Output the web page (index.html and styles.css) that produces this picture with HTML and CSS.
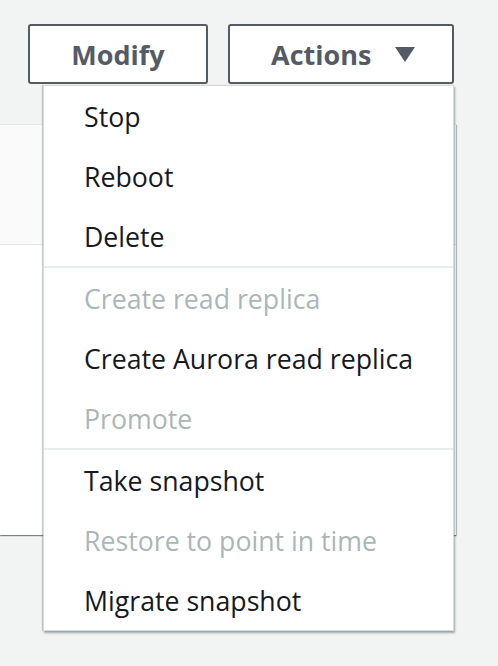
FILE: index.html
```html
<!DOCTYPE html>
<html lang="en">
<head>
<meta charset="utf-8">
<title>Actions menu</title>
<link rel="stylesheet" href="styles.css">
</head>
<body>
<div class="page">
  <div class="toolbar">
    <button class="btn btn-modify" type="button">Modify</button>
    <div class="dropdown">
      <button class="btn btn-actions" type="button">
        <span>Actions</span>
        <svg class="caret" width="20" height="15" viewBox="0 0 20 15" aria-hidden="true"><polygon points="0,0 20,0 10,15" fill="#545b64"/></svg>
      </button>
      <ul class="menu">
        <li class="group">
          <div class="item">Stop</div>
          <div class="item">Reboot</div>
          <div class="item">Delete</div>
        </li>
        <li class="group">
          <div class="item disabled">Create read replica</div>
          <div class="item">Create Aurora read replica</div>
          <div class="item disabled">Promote</div>
        </li>
        <li class="group">
          <div class="item">Take snapshot</div>
          <div class="item disabled">Restore to point in time</div>
          <div class="item">Migrate snapshot</div>
        </li>
      </ul>
    </div>
  </div>
  <div class="panel">
    <div class="panel-head"></div>
    <div class="panel-body"></div>
  </div>
</div>
</body>
</html>
```

FILE: styles.css
```css
html, body {
  margin: 0;
  padding: 0;
  background: #f2f3f3;
  font-family: "Open Sans", "Noto Sans", "Liberation Sans", sans-serif;
}

.page {
  width: 498px;
  height: 666px;
  overflow: hidden;
}

.toolbar {
  display: flex;
  justify-content: flex-end;
  gap: 20px;
  padding: 24px 44px 0 0;
  position: relative;
  z-index: 2;
}

.btn {
  box-sizing: border-box;
  height: 60px;
  border: 2px solid #545b64;
  border-radius: 3px;
  background: #ffffff;
  color: #545b64;
  font-family: inherit;
  font-weight: 700;
  font-size: 27px;
  padding: 0;
  margin: 0;
  display: flex;
  align-items: center;
  justify-content: center;
}

.btn-modify {
  width: 180px;
}

.dropdown {
  position: relative;
}

.btn-actions {
  width: 226px;
  justify-content: flex-start;
  padding-left: 41px;
  gap: 24px;
}

.caret {
  display: block;
  margin-top: 1px;
}

.menu {
  position: absolute;
  right: 0;
  top: 61px;
  width: 411px;
  box-sizing: border-box;
  margin: 0;
  padding: 0;
  list-style: none;
  background: #ffffff;
  border: 1px solid #d5dbdb;
  box-shadow: 1px 2px 2px 0 rgba(0, 28, 36, 0.35), -1px 0 1px 0 rgba(0, 28, 36, 0.2);
}

.group + .group {
  border-top: 2px solid #eaeded;
}

.item {
  height: 60px;
  display: flex;
  align-items: center;
  padding-left: 40px;
  font-size: 26.7px;
  color: #16191f;
  white-space: nowrap;
}

.item.disabled {
  color: #aab7b8;
}

.panel {
  margin-top: 40px;
  width: 456px;
  background: #ffffff;
  box-shadow: 0 1px 1px 0 rgba(0, 28, 36, 0.4), 1px 1px 1px 0 rgba(0, 28, 36, 0.2);
}

.panel-head {
  height: 119px;
  background: #fafafa;
  border-top: 1px solid #e4e7e7;
  border-bottom: 1px solid #e4e7e7;
}

.panel-body {
  height: 290px;
}
```
